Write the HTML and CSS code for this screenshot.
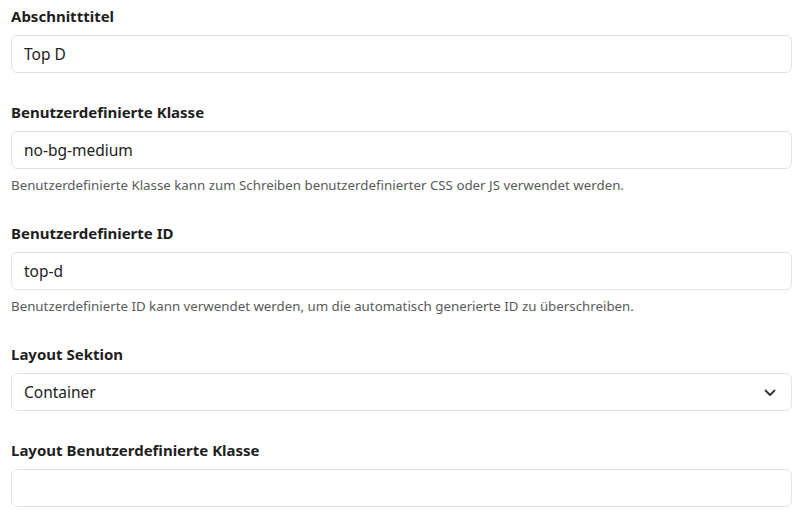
FILE: index.html
```html
<!DOCTYPE html>
<html lang="de">
<head>
    <meta charset="UTF-8">
    <title>Sektion bearbeiten</title>
    <link rel="stylesheet" href="styles.css">
</head>
<body>
    <form class="settings">
        <!-- Abschnitttitel -->
        <div class="field">
            <label for="title">Abschnitttitel</label>
            <input type="text" id="title" class="control" value="Top D">
        </div>

        <!-- Custom class -->
        <div class="field">
            <label for="cls">Benutzerdefinierte Klasse</label>
            <input type="text" id="cls" class="control" value="no-bg-medium">
            <p class="help">Benutzerdefinierte Klasse kann zum Schreiben benutzerdefinierter CSS oder JS verwendet werden.</p>
        </div>

        <!-- Custom id -->
        <div class="field">
            <label for="cid">Benutzerdefinierte ID</label>
            <input type="text" id="cid" class="control" value="top-d">
            <p class="help">Benutzerdefinierte ID kann verwendet werden, um die automatisch generierte ID zu überschreiben.</p>
        </div>

        <!-- Layout -->
        <div class="field">
            <label for="layout">Layout Sektion</label>
            <div class="select-wrap">
                <select id="layout" class="control">
                    <option>Container</option>
                    <option>Volle Breite</option>
                </select>
                <svg class="chevron" width="12" height="8" viewBox="0 0 12 8">
                    <path d="M1.5 1.5 L6 6 L10.5 1.5" fill="none" stroke="#333" stroke-width="1.8" stroke-linecap="round" stroke-linejoin="round"/>
                </svg>
            </div>
        </div>

        <div class="field">
            <label for="lcls">Layout Benutzerdefinierte Klasse</label>
            <input type="text" id="lcls" class="control" value="">
        </div>
    </form>
</body>
</html>
```

FILE: styles.css
```css
body {
    font-family: "Noto Sans", "Open Sans", sans-serif;
    margin: 0;
    padding: 6px 8px 0 11px;
    background-color: #fff;
    color: #212529;
}

/* Form Styling */
.settings {
    display: flex;
    flex-direction: column;
}

.field {
    display: flex;
    flex-direction: column;
    margin-bottom: 29px;
}

label {
    font-weight: bold;
    font-size: 15px;
    line-height: 20px;
    margin-bottom: 9px;
    color: #1e1e1e;
}

.control {
    box-sizing: border-box;
    width: 100%;
    height: 38px;
    padding: 0 12px;
    border: 1px solid #e3e3e3;
    border-radius: 6px;
    background-color: #fff;
    font-family: inherit;
    font-size: 15.5px;
    color: #222;
    outline: none;
}

.help {
    margin: 7px 0 0;
    font-size: 13.3px;
    line-height: 18px;
    color: #5a5a5a;
}

/* Select */
.select-wrap {
    position: relative;
}

select.control {
    appearance: none;
    -webkit-appearance: none;
}

.chevron {
    position: absolute;
    right: 16px;
    top: 16px;
    pointer-events: none;
}
```
